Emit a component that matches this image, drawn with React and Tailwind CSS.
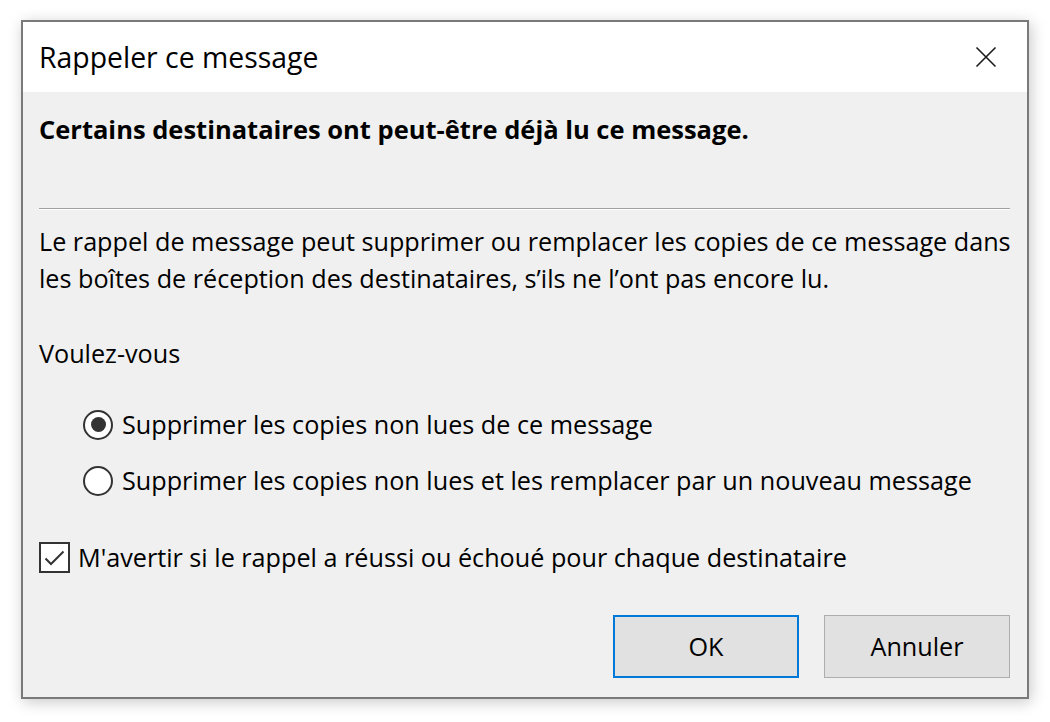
import { useState } from "react";

function Radio({ checked, label, onSelect }) {
  return (
    <label className="flex items-center gap-[9px] cursor-default" onClick={onSelect}>
      <span className="size-[30px] rounded-full border-2 border-[#333333] bg-white flex items-center justify-center">
        {checked && <span className="size-[15px] rounded-full bg-[#333333]" />}
      </span>
      <span>{label}</span>
    </label>
  );
}

export default function App() {
  const [choice, setChoice] = useState(0);
  const [notify, setNotify] = useState(true);

  return (
    <div
      className="min-h-screen bg-white pl-[21px] pt-[20px] text-black"
      style={{ fontFamily: '"Open Sans", "Noto Sans", sans-serif' }}
    >
      <div className="w-[1008px] h-[679px] border-2 border-[#7a7a7a] bg-[#f0f0f0] shadow-[2px_3px_14px_rgba(0,0,0,0.22)] flex flex-col">
        <header className="h-[70px] bg-white flex items-center justify-between pl-[16px] pr-[30px]">
          <h1 className="text-[28.4px] leading-none">Rappeler ce message</h1>
          <button type="button" className="size-[22px] flex items-center justify-center">
            <svg width="22" height="22" viewBox="0 0 22 22" fill="none" stroke="#1a1a1a" strokeWidth="1.6">
              <path d="M1.5 1.5 L20.5 20.5 M20.5 1.5 L1.5 20.5" />
            </svg>
          </button>
        </header>

        <div className="flex-1 flex flex-col pl-[16px] pr-[17px] text-[25.2px] leading-[37px]">
          <p className="font-bold text-[25.5px] mt-[19px]">Certains destinataires ont peut-être déjà lu ce message.</p>

          <div className="mt-[60px] border-t border-t-[#a0a0a0] border-b border-b-white" />

          <p className="mt-[13px] whitespace-nowrap">
            Le rappel de message peut supprimer ou remplacer les copies de ce message dans
            <br />
            les boîtes de réception des destinataires, s’ils ne l’ont pas encore lu.
          </p>

          <p className="mt-[38px]">Voulez-vous</p>

          <div className="mt-[34px] pl-[44px] flex flex-col gap-[19px]">
            <Radio checked={choice === 0} onSelect={() => setChoice(0)} label="Supprimer les copies non lues de ce message" />
            <Radio
              checked={choice === 1}
              onSelect={() => setChoice(1)}
              label="Supprimer les copies non lues et les remplacer par un nouveau message"
            />
          </div>

          <label className="mt-[40px] flex items-center gap-[8px] cursor-default" onClick={() => setNotify((v) => !v)}>
            <span className="size-[31px] border-2 border-[#333333] bg-white flex items-center justify-center">
              {notify && (
                <svg width="21" height="16" viewBox="0 0 21 16" fill="none" stroke="#333333" strokeWidth="2">
                  <path d="M1.5 8.5 L7 14 L19.5 1.5" />
                </svg>
              )}
            </span>
            <span>M'avertir si le rappel a réussi ou échoué pour chaque destinataire</span>
          </label>

          <div className="mt-auto mb-[19px] flex justify-end gap-[25px]">
            <button type="button" className="w-[186px] h-[63px] bg-[#e1e1e1] border-2 border-[#0078d7]">
              OK
            </button>
            <button type="button" className="w-[186px] h-[63px] bg-[#e1e1e1] border border-[#adadad]">
              Annuler
            </button>
          </div>
        </div>
      </div>
    </div>
  );
}
